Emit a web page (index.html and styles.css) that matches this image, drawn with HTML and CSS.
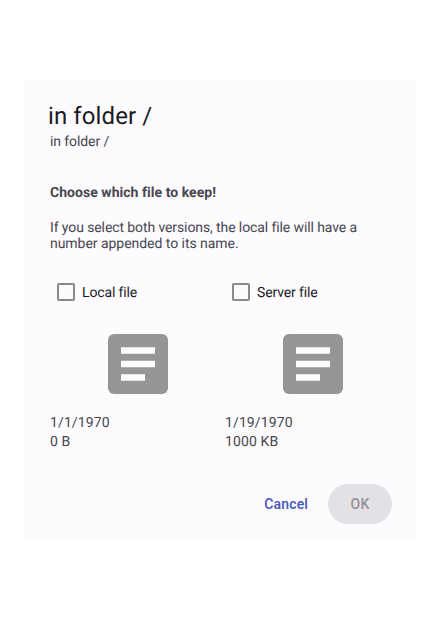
FILE: index.html
```html
<!DOCTYPE html>
<html lang="en">
<head>
<meta charset="utf-8">
<title>Choose file</title>
<link rel="stylesheet" href="styles.css">
</head>
<body>
<main class="dialog">
  <h1 class="title">in folder /</h1>
  <p class="subtitle">in folder /</p>
  <p class="heading">Choose which file to keep!</p>
  <p class="description"><span class="lead">If you select both versions, the local file will have a</span><br>number appended to its name.</p>
  <div class="files">
    <section class="file">
      <div class="option"><span class="checkbox"></span><span class="label">Local file</span></div>
      <svg class="thumb" viewBox="0 0 60 60"><rect width="60" height="60" rx="6" fill="#969696"/><path d="M13 13.2h34v6.6H13zM13 26.7h34v6.6H13zM13 40.2h24v6.6H13z" fill="#fefbff"/></svg>
      <p class="meta">1/1/1970</p>
      <p class="meta">0 B</p>
    </section>
    <section class="file">
      <div class="option"><span class="checkbox"></span><span class="label">Server file</span></div>
      <svg class="thumb" viewBox="0 0 60 60"><rect width="60" height="60" rx="6" fill="#969696"/><path d="M13 13.2h34v6.6H13zM13 26.7h34v6.6H13zM13 40.2h24v6.6H13z" fill="#fefbff"/></svg>
      <p class="meta">1/19/1970</p>
      <p class="meta">1000 KB</p>
    </section>
  </div>
  <div class="actions">
    <button class="cancel">Cancel</button>
    <button class="ok" disabled>OK</button>
  </div>
</main>
</body>
</html>
```
FILE: styles.css
```css
* { box-sizing: border-box; }
body { margin: 0; background: #fff; font-family: Roboto, sans-serif; text-rendering: geometricPrecision; }
p, h1 { margin: 0; }
.dialog {
  width: 392px;
  height: 462px;
  margin: 80px 24px 0;
  padding: 20px 24px 18px;
  background: #fefbff;
  color: #46464f;
  font-size: 14px;
  line-height: 16px;
}
.title { font-size: 24px; line-height: 32px; font-weight: 400; color: #1b1b1f; letter-spacing: 0.1px; }
.subtitle { margin: 2px 2px 0; letter-spacing: -0.1px; }
.heading { margin: 35px 2px 0; font-weight: 700; letter-spacing: 0.04px; }
.description { margin: 19px 2px 0; letter-spacing: -0.04px; }
.lead { letter-spacing: -0.1px; }
.files { display: grid; grid-template-columns: 175px 175px; margin: 24px 2px 0; }
.option { display: flex; align-items: center; gap: 7px; height: 32px; padding-left: 7px; color: #1b1b1f; letter-spacing: -0.13px; }
.label { padding-top: 2px; }
.checkbox { width: 18px; height: 18px; border: 2px solid #8a898c; border-radius: 2px; }
.thumb { display: block; width: 60px; height: 60px; margin: 26px 0 20px 58px; }
.meta { height: 19px; line-height: 19px; letter-spacing: 0.12px; }
.actions { display: flex; justify-content: flex-end; margin-top: 32px; }
button { height: 40px; border: 0; border-radius: 20px; font: 500 14px/20px Roboto, sans-serif; letter-spacing: 0.14px; }
.cancel { padding: 0; margin-right: 20px; background: none; color: #4355b9; }
.ok { width: 64px; background: #e3e1e6; color: #939297; }
```
